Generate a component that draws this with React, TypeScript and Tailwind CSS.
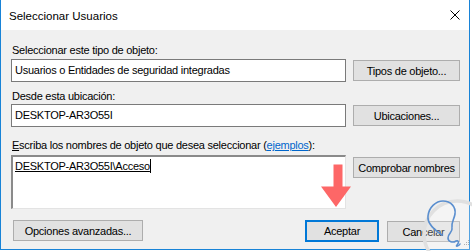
import React from 'react'

function WinButton({ label, className = '' }: { label: string; className?: string }) {
  return (
    <div className={`h-[21px] flex items-center justify-center whitespace-nowrap bg-[#e1e1e1] border border-[#adadad] ${className}`}>
      {label}
    </div>
  )
}

export default function App() {
  return (
    <div className="w-[472px] h-[251px] bg-white text-black text-[11px] tracking-[-0.25px] leading-[14px] font-['Liberation_Sans',Arial,sans-serif] overflow-hidden">
      <div className="relative w-[470px] h-[250px] border-x border-b border-[#1883d7] flex flex-col">
        {/* Title bar */}
        <div className="h-[30px] shrink-0 bg-white flex items-start justify-between pl-[8px] pr-[8px] pt-[9px]">
          <span className="text-[11.5px] tracking-normal">Seleccionar Usuarios</span>
          <svg width="10" height="10" viewBox="0 0 10 10" className="mt-[1px] mr-[1px]">
            <path d="M0.5 0.5 L9.5 9.5 M9.5 0.5 L0.5 9.5" stroke="#000" strokeWidth="1" />
          </svg>
        </div>

        {/* Body */}
        <div className="flex-1 bg-[#f0f0f0] pl-[10px] pr-[9px] pt-[13px] flex flex-col">
          <div className="pl-[1px]">Seleccionar este tipo de objeto:</div>
          <div className="mt-[2px] flex items-start gap-[7px]">
            <div className="w-[335px] h-[23px] bg-white border border-[#7a7a7a] px-[3px] pt-[3px]">
              Usuarios o Entidades de seguridad integradas
            </div>
            <WinButton label="Tipos de objeto..." className="w-[107px] mt-[1px]" />
          </div>

          <div className="mt-[7px] pl-[1px]">Desde esta ubicación:</div>
          <div className="mt-[1px] flex items-start gap-[7px]">
            <div className="w-[335px] h-[23px] bg-white border border-[#7a7a7a] px-[3px] pt-[3px]">
              DESKTOP-AR3O55I
            </div>
            <WinButton label="Ubicaciones..." className="w-[107px] mt-[1px]" />
          </div>

          <div className="mt-[11px] pl-[1px]">
            <span className="underline underline-offset-[1px]">E</span>scriba los nombres de objeto que desea seleccionar (
            <span className="text-[#0066cc] underline underline-offset-[1px]">ejemplos</span>):
          </div>
          <div className="mt-[3px] flex items-start gap-[7px]">
            <div className="w-[335px] h-[54px] bg-white border-t-2 border-l-2 border-t-[#8a8a8a] border-l-[#8a8a8a] border-b border-r border-b-[#e3e3e3] border-r-[#e3e3e3] pl-[2px] pt-[2px]">
              <span className="inline-block border-r border-black underline underline-offset-[1px] decoration-black">
                DESKTOP-AR3O55I\Acceso
              </span>
            </div>
            <WinButton label="Comprobar nombres" className="w-[107px] mt-[2px]" />
          </div>

          <div className="mt-[11px] flex items-start justify-between">
            <WinButton label="Opciones avanzadas..." className="w-[130px] ml-[2px]" />
            <div className="flex items-start gap-[8px]">
              <div className="w-[74px] h-[22px] flex items-center justify-center bg-[#e1e1e1] border-2 border-[#0078d7]">
                Aceptar
              </div>
              <WinButton label="Cancelar" className="w-[73px] mt-[1px]" />
            </div>
          </div>
        </div>

        {/* Red annotation arrow */}
        <svg className="absolute left-[319px] top-[164px]" width="32" height="44" viewBox="0 0 32 44">
          <path d="M13.5 0.5 H22.5 V22.5 H31 L16 43 L1 22.5 H13.5 Z" fill="#fd6767" />
        </svg>

        {/* Watermark logo */}
        <svg className="absolute left-[404px] top-[180px]" width="67" height="71" viewBox="0 0 67 71">
          <circle cx="52" cy="54" r="33" fill="rgba(255,255,255,0.25)" stroke="#e0e0e0" strokeWidth="3.5" />
          <path
            d="M37 55 C30 50 22 44 23 36 C24 27 31 21 38 21 C46 21 51 27 50 34 C49 40 46 42 47 48 C48 52 43 53 43 58 C43 62 48 63 51 61 C53 60 55 62 52 65 C50 67 54 66 55 64"
            fill="none"
            stroke="#5b8fcf"
            strokeWidth="1.6"
            strokeLinecap="round"
          />
          <g fill="#b0b0b0">
            <rect x="63" y="60" width="1" height="1" />
            <rect x="61" y="62" width="1" height="1" />
            <rect x="63" y="62" width="1" height="1" />
            <rect x="59" y="64" width="1" height="1" />
            <rect x="61" y="64" width="1" height="1" />
            <rect x="63" y="64" width="1" height="1" />
          </g>
        </svg>
      </div>
    </div>
  )
}
